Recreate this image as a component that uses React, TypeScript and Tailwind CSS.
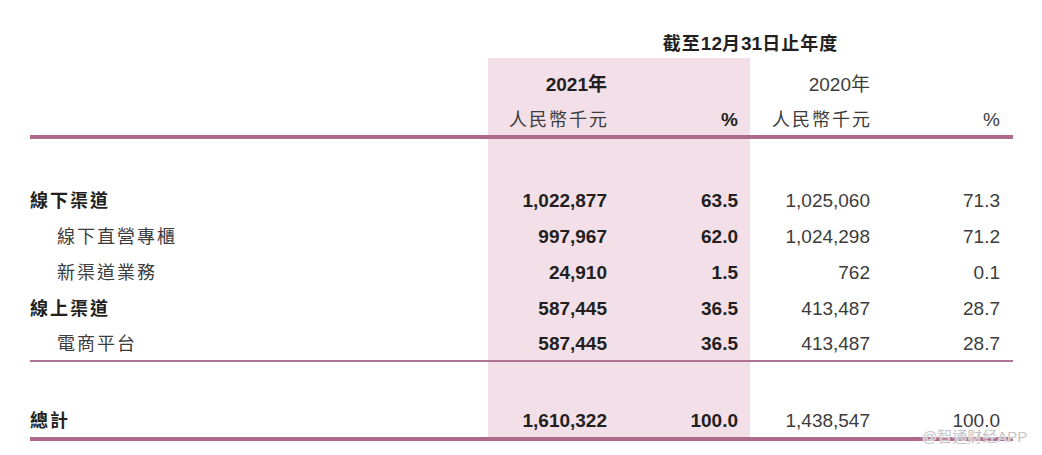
import type { ReactNode } from 'react';

const FONT = "font-['Liberation_Sans','Noto_Sans_CJK_TC',sans-serif]";

// column widths: label | 2021 amount | 2021 % | 2020 amount | 2020 %
const COLS = [
    'w-[458px] justify-start',
    'w-[132px] pr-[13px] justify-end bg-[#f2dfe7]',
    'w-[130px] pr-[12px] justify-end bg-[#f2dfe7]',
    'w-[133px] pr-[13px] justify-end',
    'w-[130px] pr-[13px] justify-end',
];

type RowProps = { h: string; align?: string; cells?: ReactNode[] };

const Row = ({ h, align = 'items-center', cells = [] }: RowProps) => (
    <div className={`flex ${h}`}>
        {COLS.map((c, i) => (
            <div key={i} className={`flex ${align} ${c}`}>
                {cells[i]}
            </div>
        ))}
    </div>
);

const Cjk = ({ children, bold }: { children: ReactNode; bold?: boolean }) => (
    <span
        className={`whitespace-nowrap text-[18px] leading-7 tracking-[2px] mr-[-2px] ${bold ? 'font-bold text-[#231f20]' : 'text-[#3c3c3c]'}`}
    >
        {children}
    </span>
);

const B = ({ children }: { children: ReactNode }) => (
    <span className="whitespace-nowrap text-[19px] leading-7 font-bold text-[#231f20]">{children}</span>
);

const N = ({ children }: { children: ReactNode }) => (
    <span className="whitespace-nowrap text-[19px] leading-7 text-[#3c3c3c]">{children}</span>
);

const Label = ({ children, sub, bold }: { children: ReactNode; sub?: boolean; bold?: boolean }) => (
    <div className={`whitespace-nowrap ${sub ? 'pl-[27px]' : ''}`}>
        <Cjk bold={bold}>{children}</Cjk>
    </div>
);

const rows = [
    { label: '線下渠道', bold: true, v: ['1,022,877', '63.5', '1,025,060', '71.3'] },
    { label: '線下直營專櫃', sub: true, v: ['997,967', '62.0', '1,024,298', '71.2'] },
    { label: '新渠道業務', sub: true, v: ['24,910', '1.5', '762', '0.1'] },
    { label: '線上渠道', bold: true, v: ['587,445', '36.5', '413,487', '28.7'] },
    { label: '電商平台', sub: true, v: ['587,445', '36.5', '413,487', '28.7'] },
];

const App = () => {
    return (
        <div className={`relative w-[1042px] h-[455px] bg-white ${FONT}`}>
            <div className="pl-[30px] pt-[30px] w-[1013px]">
                {/* title */}
                <div className="flex h-[28px]">
                    <div className="w-[458px]" />
                    <div className="flex-1 flex items-center justify-center">
                        <span className="whitespace-nowrap text-[18px] leading-7 font-bold text-[#231f20] tracking-[1px]">
                            截至<span className="text-[19px] tracking-normal">12</span>月
                            <span className="text-[19px] tracking-normal">31</span>日止年度
                        </span>
                    </div>
                </div>

                {/* headers */}
                <Row
                    h="h-[43px]"
                    align="items-end pb-[2px]"
                    cells={[null, <B>2021年</B>, null, <N>2020年</N>, null]}
                />
                <Row
                    h="h-[34px]"
                    align="items-end pb-[1px]"
                    cells={[
                        null,
                        <Cjk>人民幣千元</Cjk>,
                        <B>%</B>,
                        <Cjk>人民幣千元</Cjk>,
                        <N>%</N>,
                    ]}
                />
                <div className="h-[4px] bg-[#ad6a8c]" />

                <Row h="h-[44px]" />

                {rows.map((r, i) => (
                    <Row
                        key={r.label}
                        h={i === rows.length - 1 ? 'h-[33px]' : 'h-[36px]'}
                        cells={[
                            <Label sub={r.sub} bold={r.bold}>{r.label}</Label>,
                            <B>{r.v[0]}</B>,
                            <B>{r.v[1]}</B>,
                            <N>{r.v[2]}</N>,
                            <N>{r.v[3]}</N>,
                        ]}
                    />
                ))}
                <div className="h-[1.5px] bg-[#b07392]" />

                <Row h="h-[43px]" />
                <Row
                    h="h-[32px]"
                    cells={[
                        <Label bold>總計</Label>,
                        <B>1,610,322</B>,
                        <B>100.0</B>,
                        <N>1,438,547</N>,
                        <N>100.0</N>,
                    ]}
                />
                <div className="h-[4px] bg-[#ad6a8c]" />
            </div>

            {/* watermark */}
            <span className="absolute left-[922px] top-[427px] whitespace-nowrap text-[15px] leading-5 text-[#c4c4c4] [text-shadow:0_0_1px_#ffffff,0_0_1px_#ffffff]">
                @智通财经APP
            </span>
        </div>
    );
};

export default App;
